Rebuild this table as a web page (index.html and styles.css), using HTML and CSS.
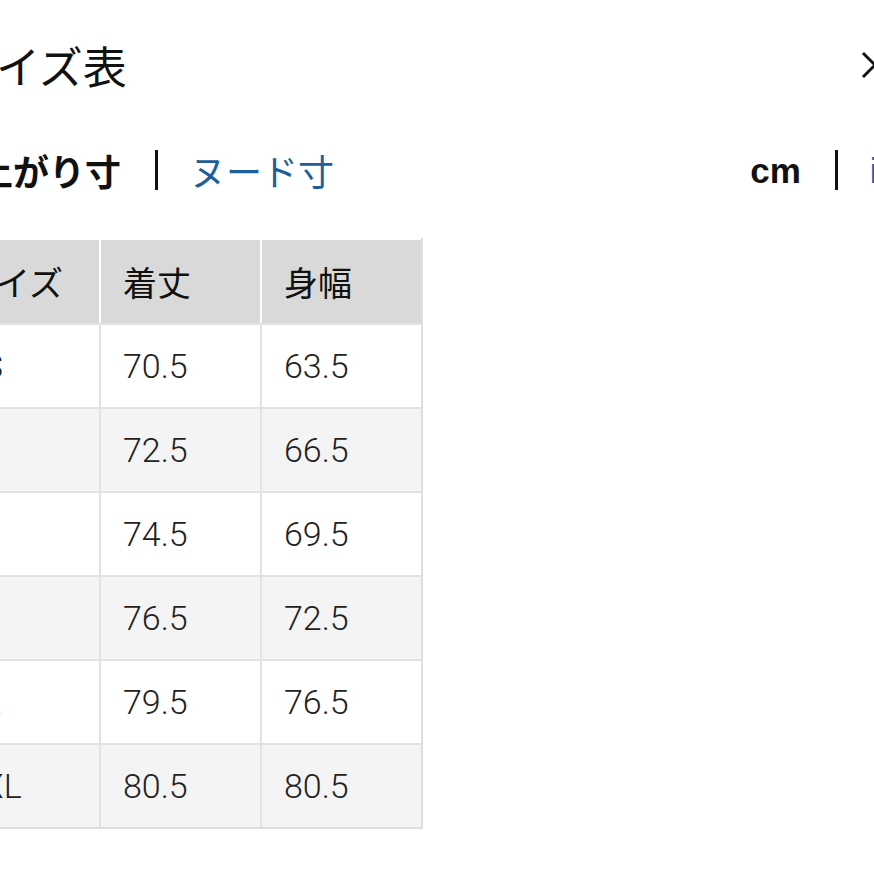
FILE: index.html
```html
<!DOCTYPE html>
<html lang="ja">
<head>
<meta charset="utf-8">
<title>サイズ表</title>
<link rel="stylesheet" href="styles.css">
</head>
<body>
<div class="page">
  <header class="top">
    <h1 class="title">サイズ表</h1>
    <button class="close" aria-label="閉じる">
      <svg width="30" height="30" viewBox="0 0 30 30"><path d="M3 3 L27 27 M27 3 L3 27" stroke="#111" stroke-width="3" fill="none"/></svg>
    </button>
  </header>
  <div class="tabs">
    <div class="group">
      <span class="tab active">仕上がり寸</span>
      <span class="sep"></span>
      <span class="tab link">ヌード寸</span>
    </div>
    <div class="group units">
      <span class="unit active">cm</span>
      <span class="sep"></span>
      <span class="unit link">inch</span>
    </div>
  </div>
  <table class="chart">
    <thead>
      <tr><th>サイズ</th><th>着丈</th><th>身幅</th></tr>
    </thead>
    <tbody>
      <tr><td>XS</td><td>70.5</td><td>63.5</td></tr>
      <tr><td>S</td><td>72.5</td><td>66.5</td></tr>
      <tr><td>M</td><td>74.5</td><td>69.5</td></tr>
      <tr><td>L</td><td>76.5</td><td>72.5</td></tr>
      <tr><td>XL</td><td>79.5</td><td>76.5</td></tr>
      <tr><td>XXL</td><td>80.5</td><td>80.5</td></tr>
    </tbody>
  </table>
</div>
</body>
</html>
```

FILE: styles.css
```css
html, body {
  margin: 0;
  padding: 0;
  background: #fff;
  overflow: hidden;
}
body {
  width: 874px;
  height: 874px;
  font-family: "Noto Sans CJK JP", "Noto Sans", sans-serif;
  color: #111;
}
.page {
  margin-left: -62px;
  width: 1000px;
}
.top {
  display: flex;
  justify-content: space-between;
  align-items: center;
  height: 130px;
}
.title {
  margin: 0;
  padding-left: 14px;
  font-size: 44px;
  font-weight: 400;
  line-height: 1;
}
.close {
  border: 0;
  background: none;
  padding: 0;
  margin-right: 48px;
  display: flex;
}
.tabs {
  display: flex;
  justify-content: space-between;
  align-items: center;
  height: 80px;
}
.group {
  display: flex;
  align-items: center;
  padding-left: 3px;
}
.units {
  padding-right: 0;
  margin-right: 4px;
}
.tab {
  font-size: 36px;
  line-height: 1;
}
.tab.active {
  font-weight: 700;
}
.link {
  color: #1d5f9c;
}
.sep {
  width: 3px;
  height: 40px;
  background: #111;
  margin: 0 32px 0 34px;
}
.unit {
  font-family: "Liberation Sans", Arial, sans-serif;
  font-size: 35px;
  line-height: 1;
}
.unit.active {
  font-weight: 700;
}
.chart {
  margin-top: 28px;
  border-collapse: separate;
  border-spacing: 0;
  border-right: 2px solid #dedede;
  border-bottom: 2px solid #dedede;
}
.chart th, .chart td {
  width: 161px;
  height: 84px;
  box-sizing: border-box;
  padding: 0 0 0 22px;
  text-align: left;
  font-size: 34px;
  border-left: 2px solid #e2e2e2;
  border-top: 2px solid #e2e2e2;
}
.chart th {
  background: #d9d9d9;
  font-weight: 400;
  border-left-color: #fff;
  border-top-color: #fff;
  height: 85px;
}
.chart td {
  font-family: Roboto, "Noto Sans", sans-serif;
  font-weight: 300;
  font-size: 34px;
  color: #222;
}
.chart tbody tr:nth-child(even) td {
  background: #f4f4f4;
}
```
